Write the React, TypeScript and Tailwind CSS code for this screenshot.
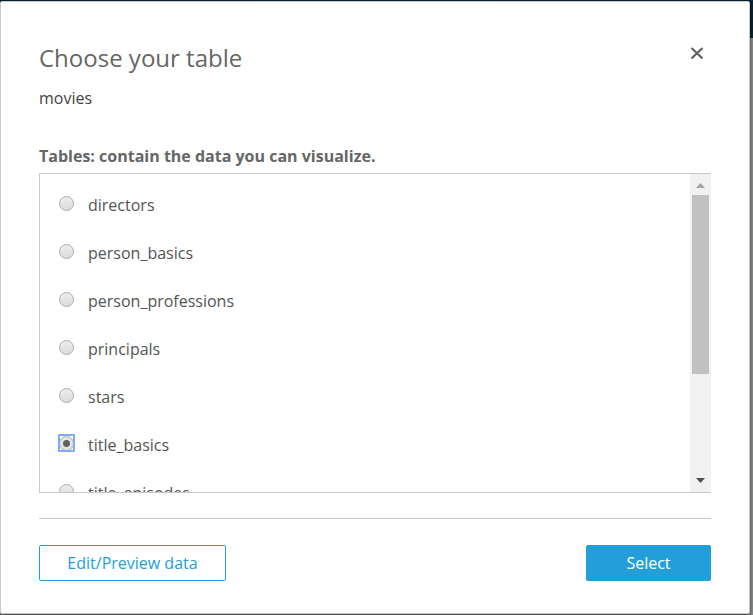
import { useState } from "react";

const tables = [
  "directors",
  "person_basics",
  "person_professions",
  "principals",
  "stars",
  "title_basics",
  "title_episodes",
];

function TableOption({
  name,
  checked,
  onSelect,
}: {
  name: string;
  checked: boolean;
  onSelect: () => void;
}) {
  return (
    <label className="flex h-12 shrink-0 items-start gap-[13px] text-base leading-6 text-[#545454]">
      <span
        className={
          "mt-0.5 flex h-[18px] w-[17px] shrink-0 items-center justify-center rounded-[1px] " +
          (checked ? "outline-2 -outline-offset-2 outline-[#7eacf5]" : "")
        }
      >
        <input
          type="radio"
          name="table"
          checked={checked}
          onChange={onSelect}
          className="size-[15px] shrink-0 appearance-none rounded-full border border-[#acacac] bg-linear-to-b from-[#ededed] to-[#dcdcdc] outline-none checked:bg-[radial-gradient(circle,#606060_3px,#e4e4e4_4px)]"
        />
      </span>
      <span className="pt-px">{name}</span>
    </label>
  );
}

function ScrollTrack() {
  return (
    <div aria-hidden="true" className="flex w-[21px] shrink-0 flex-col items-center bg-[#f1f1f1]">
      <svg width="21" height="21" viewBox="0 0 21 21" className="shrink-0">
        <path d="M6 14h9l-4.5-5z" fill="#a3a3a3" />
      </svg>
      <div className="h-[179px] w-[17px] bg-[#c1c1c1]" />
      <svg width="21" height="21" viewBox="0 0 21 21" className="mt-auto shrink-0">
        <path d="M6 7h9l-4.5 5z" fill="#505050" />
      </svg>
    </div>
  );
}

export default function App() {
  const [selected, setSelected] = useState("title_basics");

  return (
    <div className="min-h-screen bg-linear-to-b from-[#052631] from-[38px] to-[#8c8e8e] to-[38px] pt-px pr-[3px] font-['Open_Sans','Noto_Sans',sans-serif]">
      <main
        role="dialog"
        aria-labelledby="dialog-title"
        className="rounded-[2px] border border-[#c8c8c8] bg-white px-[38px] pt-10 pb-8 shadow-[0_2px_4px_#00000099]"
      >
        <header className="flex items-start justify-between">
          <h1 id="dialog-title" className="text-2xl leading-8 text-[#666]">
            Choose your table
          </h1>
          <button type="button" aria-label="Close" className="mr-1.5 py-[3px]">
            <svg width="16" height="16" viewBox="0 0 16 16" fill="none" stroke="#626262" strokeWidth="2.2">
              <path d="M2.5 3l11 10.5M13.5 3l-11 10.5" />
            </svg>
          </button>
        </header>
        <p className="mt-3 text-base leading-6 text-[#444]">movies</p>

        <h2 id="table-list" className="mt-[34px] text-base leading-6 font-bold text-[#666]">
          Tables: contain the data you can visualize.
        </h2>
        <div className="mt-[5px] flex h-80 border-y border-l border-[#c8c8c8]">
          <div
            role="radiogroup"
            aria-labelledby="table-list"
            className="flex min-w-0 grow flex-col overflow-hidden pt-[18px] pl-[18px]"
          >
            {tables.map((name) => (
              <TableOption
                key={name}
                name={name}
                checked={name === selected}
                onSelect={() => setSelected(name)}
              />
            ))}
          </div>
          <ScrollTrack />
        </div>

        <footer className="mt-[25px] flex justify-between border-t border-[#c8c8c8] pt-[26px] text-base">
          <button
            type="button"
            className="h-9 w-[187px] rounded-[2px] border border-[#229fd9] text-[#229fd9]"
          >
            Edit/Preview data
          </button>
          <button type="button" className="h-9 w-[125px] rounded-[2px] bg-[#229fd9] text-white">
            Select
          </button>
        </footer>
      </main>
    </div>
  );
}
